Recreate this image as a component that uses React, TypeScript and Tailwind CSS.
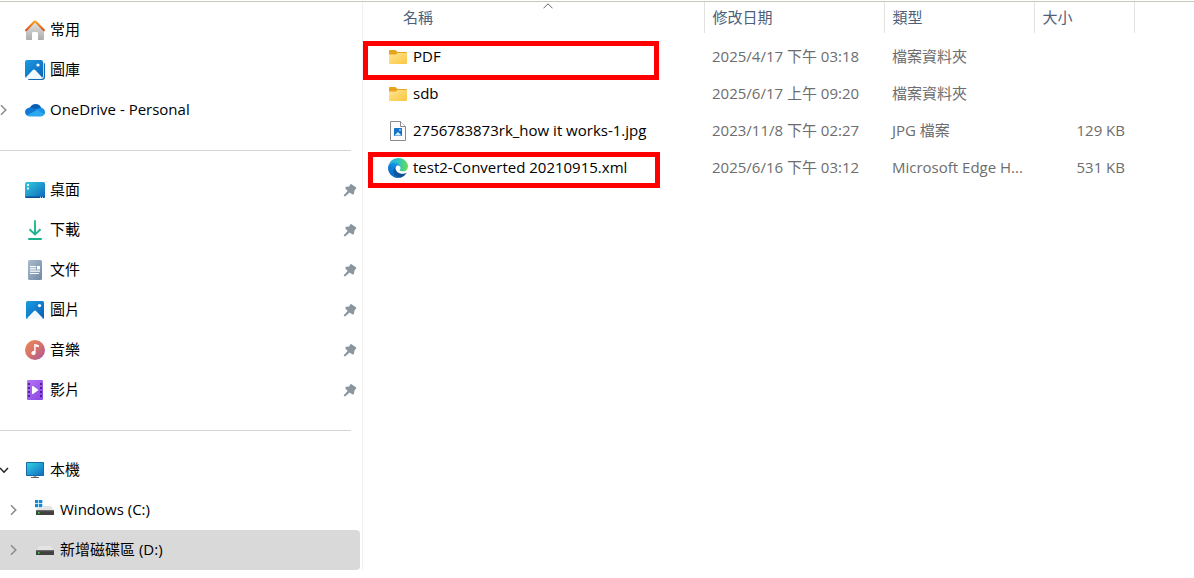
import React from 'react';

const HomeIcon = () => (
  <svg width="20" height="20" viewBox="0 0 20 20" fill="none">
    <defs>
      <linearGradient id="homeBody" x1="0" y1="0" x2="0" y2="1">
        <stop offset="0%" stopColor="#e4e4e4" />
        <stop offset="100%" stopColor="#adadad" />
      </linearGradient>
      <linearGradient id="homeRoof" x1="0" y1="0" x2="0" y2="1">
        <stop offset="0%" stopColor="#f9a11b" />
        <stop offset="100%" stopColor="#d9501c" />
      </linearGradient>
    </defs>
    <path d="M1 10L10 1.5L19 10V19Q19 20 18 20H13V13.2Q13 12 11.8 12H8.2Q7 12 7 13.2V20H2Q1 20 1 19Z" fill="url(#homeBody)" />
    <path d="M1.1 10.3L9.3 1.8Q10 1.1 10.7 1.8L18.9 10.3" stroke="url(#homeRoof)" strokeWidth="2" strokeLinecap="round" />
  </svg>
);

const GalleryIcon = () => (
  <svg width="20" height="20" viewBox="0 0 20 20" fill="none">
    <defs>
      <linearGradient id="gallery" x1="0" y1="0" x2="1" y2="1">
        <stop offset="0%" stopColor="#1b9de2" />
        <stop offset="100%" stopColor="#0a62b8" />
      </linearGradient>
    </defs>
    <path d="M18.2 2.2Q20 2.6 20 4.5V17Q20 20 17 20H5Q3 20 2.6 18.8H16Q18.2 18.8 18.2 16.5Z" fill="#0f6ab8" />
    <rect width="18" height="18" rx="2" fill="url(#gallery)" />
    <path d="M1 17.3L7.8 10Q9 8.9 10.2 10L17 17.3Q16.6 18 16 18H2Q1.3 18 1 17.3Z" fill="#f3f9fe" />
    <circle cx="13" cy="5" r="1.6" fill="#fff" />
    <path d="M18.5 1.5V16.5Q18.5 18.5 16.5 18.5H2" stroke="#fff" strokeWidth="0.7" />
  </svg>
);

const OneDriveIcon = () => (
  <svg width="20" height="14" viewBox="0 0 20 14">
    <path d="M5 4.6A6.2 6.2 0 0 1 16.3 4.9L11 9L4 8Z" fill="#0a5fb4" />
    <path d="M5 4.4Q8.2 4.2 10.6 6.3L13 8L3 13Q0 11.8 0 8.8Q0.2 5 5 4.4Z" fill="#0f78d4" />
    <path d="M10.3 6.2L16.2 4.8Q19.8 5.6 20 9.2Q20 11 19 12L11 8.5Z" fill="#1a93e6" />
    <path d="M2 12.3L11.3 7.2Q12.3 6.8 13.2 7.3L19.2 11.6Q18 13.5 16 13.5H4.8Q3.2 13.5 2 12.3Z" fill="#2aa7ee" />
  </svg>
);

const DesktopIcon = () => (
  <svg width="20" height="16" viewBox="0 0 20 16">
    <defs>
      <linearGradient id="desktop" x1="0" y1="0" x2="1" y2="1">
        <stop offset="0%" stopColor="#33cbe0" />
        <stop offset="100%" stopColor="#0c66b9" />
      </linearGradient>
    </defs>
    <rect width="20" height="16" rx="1.5" fill="url(#desktop)" />
    <path d="M0 14.6H20Q19.8 16 18.5 16H1.5Q0.2 16 0 14.6Z" fill="#0b4f92" />
    <path d="M2 2H4V4H2ZM2 5.5H4V7.5H2ZM15 14.8H16V15.8H15ZM17 14.8H18V15.8H17Z" fill="#e9fbff" />
  </svg>
);

const DownloadIcon = () => (
  <svg width="14" height="20" viewBox="0 0 14 20" fill="none">
    <defs>
      <linearGradient id="download" x1="0" y1="0" x2="0" y2="20" gradientUnits="userSpaceOnUse">
        <stop offset="0%" stopColor="#35c48b" />
        <stop offset="100%" stopColor="#10a894" />
      </linearGradient>
    </defs>
    <path d="M6 0.8Q6 0 7 0T8 0.8V12.2L11.8 8.6L13.2 10L7 15.8L0.8 10L2.2 8.6L6 12.2Z" fill="url(#download)" />
    <rect y="18" width="14" height="2" rx="1" fill="#19b08c" />
  </svg>
);

const DocumentIcon = () => (
  <svg width="14" height="20" viewBox="0 0 14 20">
    <defs>
      <linearGradient id="document" x1="0" y1="0" x2="1" y2="1">
        <stop offset="0%" stopColor="#a9bccf" />
        <stop offset="100%" stopColor="#7288a5" />
      </linearGradient>
    </defs>
    <rect width="14" height="20" rx="1.5" fill="url(#document)" />
    <path d="M2 6H8V7.2H2ZM2 8.3H8V9.5H2ZM9 6H12V9.5H9ZM2 10.6H12V11.8H2ZM2 12.9H11V14.1H2Z" fill="#fff" />
  </svg>
);

const PicturesIcon = () => (
  <svg width="18" height="18" viewBox="0 0 18 18">
    <defs>
      <linearGradient id="pictures" x1="0" y1="0" x2="1" y2="1">
        <stop offset="0%" stopColor="#1b9ee3" />
        <stop offset="100%" stopColor="#0b5cb2" />
      </linearGradient>
    </defs>
    <rect width="18" height="18" rx="1.5" fill="url(#pictures)" />
    <path d="M1 17.2L8 10Q9 9.1 10 10L17 17.2Q16.6 18 16 18H2Q1.3 18 1 17.2Z" fill="#f3f9fe" />
    <circle cx="13.5" cy="4.6" r="1.6" fill="#fff" />
  </svg>
);

const MusicIcon = () => (
  <svg width="20" height="20" viewBox="0 0 20 20">
    <defs>
      <linearGradient id="music" x1="0" y1="0" x2="1" y2="1">
        <stop offset="0%" stopColor="#ec8a55" />
        <stop offset="50%" stopColor="#d6726a" />
        <stop offset="100%" stopColor="#a8549f" />
      </linearGradient>
    </defs>
    <circle cx="10" cy="10" r="10" fill="url(#music)" />
    <path d="M9.2 4.4Q9.2 3.8 9.9 4L13.4 5Q13.9 5.2 13.9 5.7V7.2L10.6 6.5V13A2.1 2 0 1 1 9.2 11.1Z" fill="#fff" />
  </svg>
);

const VideoIcon = () => (
  <svg width="16" height="20" viewBox="0 0 16 20">
    <defs>
      <linearGradient id="video" x1="0" y1="0" x2="1" y2="1">
        <stop offset="0%" stopColor="#b673f5" />
        <stop offset="100%" stopColor="#8746e2" />
      </linearGradient>
    </defs>
    <rect width="16" height="20" rx="1.2" fill="url(#video)" />
    <path
      d="M1 3H3V5H1ZM1 7H3V9H1ZM1 11H3V13H1ZM1 15H3V17H1ZM13 3H15V5H13ZM13 7H15V9H13ZM13 11H15V13H13ZM13 15H15V17H13Z"
      fill="#4e2391"
    />
    <path d="M5 6.6Q5 5.6 6 6.1L10.9 9.4Q11.6 10 10.9 10.6L6 13.9Q5 14.4 5 13.4Z" fill="#fff" />
  </svg>
);

const ComputerIcon = () => (
  <svg width="18" height="16" viewBox="0 0 18 16">
    <defs>
      <linearGradient id="computer" x1="0" y1="0" x2="1" y2="1">
        <stop offset="0%" stopColor="#34cfe0" />
        <stop offset="100%" stopColor="#0d6fc4" />
      </linearGradient>
    </defs>
    <rect width="18" height="14" rx="0.8" fill="#1769a5" />
    <rect x="1" y="1" width="16" height="12" fill="url(#computer)" />
    <path d="M7.5 14H10.5V15H7.5Z" fill="#98a3ac" />
    <path d="M5 15H13V16H5Z" fill="#5d6871" />
  </svg>
);

const DriveIcon = ({ system = false }: { system?: boolean }) => (
  <svg width="20" height="20" viewBox="0 0 20 20">
    <path d="M4 6H16L19 10.5H1Z" fill="#e4e4e4" />
    <rect x="1" y="10" width="18" height="5" rx="0.6" fill="#414141" />
    <path d="M1 10.600Q1 10 1.600 10H18.400Q19 10 19 10.600V11.200H1Z" fill="#6b6b6b" />
    <rect x="3" y="12" width="1.600" height="1.600" fill="#36d83c" />
    {system && (
      <>
        <path d="M0 0H8V8H0Z" fill="#fff" />
        <path d="M0 0H3.3V3.3H0ZM4 0H7.3V3.3H4ZM0 4H3.3V7.3H0ZM4 4H7.3V7.3H4Z" fill="#118bd8" />
      </>
    )}
  </svg>
);

const FolderIcon = () => (
  <svg width="18" height="14" viewBox="0 0 18 14">
    <defs>
      <linearGradient id="folder" x1="0" y1="0" x2="1" y2="1">
        <stop offset="0%" stopColor="#ffe594" />
        <stop offset="100%" stopColor="#fbc63f" />
      </linearGradient>
    </defs>
    <path d="M0 1Q0 0 1 0H6Q6.6 0 7 0.5L8.5 2H17Q18 2 18 3V8H0Z" fill="#e8a31c" />
    <path d="M0 4.5H6.4Q7 4.5 7.4 4L8.2 3.2Q8.5 3 9 3H17Q18 3 18 4V13Q18 14 17 14H1Q0 14 0 13Z" fill="url(#folder)" />
  </svg>
);

const JpgIcon = () => (
  <svg width="16" height="20" viewBox="0 0 16 20">
    <path d="M0.5 0.5H10.5L15.5 5.5V19.5H0.5Z" fill="#fbfbfb" stroke="#8b8b8b" />
    <path d="M10.5 0.5V5.5H15.5" fill="#fff" stroke="#8b8b8b" />
    <rect x="4" y="7" width="8" height="8" rx="0.6" fill="#1272cc" />
    <path d="M4.5 14.6L8 11L11.5 14.6Z" fill="#d9effc" />
    <circle cx="10" cy="9" r="0.8" fill="#fff" />
  </svg>
);

const EdgeIcon = () => (
  <svg width="20" height="20" viewBox="0 0 256 256">
    <defs>
      <linearGradient id="edgeDark" x1="60" y1="170" x2="240" y2="170" gradientUnits="userSpaceOnUse">
        <stop offset="0%" stopColor="#0c59a4" />
        <stop offset="100%" stopColor="#114a8b" />
      </linearGradient>
      <linearGradient id="edgeBlue" x1="150" y1="100" x2="40" y2="235" gradientUnits="userSpaceOnUse">
        <stop offset="0%" stopColor="#1b9de2" />
        <stop offset="65%" stopColor="#0a78d3" />
        <stop offset="100%" stopColor="#0669bf" />
      </linearGradient>
      <linearGradient id="edgeGreen" x1="10" y1="80" x2="250" y2="90" gradientUnits="userSpaceOnUse">
        <stop offset="0%" stopColor="#2aa9e6" />
        <stop offset="50%" stopColor="#2fc2c4" />
        <stop offset="100%" stopColor="#66dd50" />
      </linearGradient>
    </defs>
    <path
      d="M231 190.500a93.700 93.700 0 0 1-10.500 4.700 101.900 101.900 0 0 1-35.900 6.500c-47.300 0-88.500-32.500-88.500-74.300a31.500 31.500 0 0 1 16.400-27.300c-42.800 1.800-53.800 46.400-53.800 72.500 0 73.900 68.100 81.400 82.800 81.400 7.900 0 19.800-2.300 27-4.600l1.300-.4a128.300 128.300 0 0 0 66.600-52.800 4 4 0 0 0-5.400-5.700Z"
      fill="url(#edgeDark)"
    />
    <path
      d="M105.700 241.400a79.200 79.200 0 0 1-22.700-21.300 80.700 80.700 0 0 1 29.500-120c3.200-1.500 8.500-4.100 15.600-4a32.400 32.400 0 0 1 25.700 13 31.900 31.900 0 0 1 6.300 18.700c0-.2 24.500-79.600-80-79.600-43.900 0-80 41.700-80 78.200a130.200 130.200 0 0 0 12.100 56 128 128 0 0 0 156.400 67 75.500 75.500 0 0 1-62.800-8Z"
      fill="url(#edgeBlue)"
    />
    <path
      d="M152.300 148.900c-.9 1-3.400 2.500-3.400 5.600 0 2.600 1.700 5.200 4.800 7.300 14.300 10 41.400 8.600 41.500 8.600a59.600 59.600 0 0 0 30.300-8.300 61.400 61.400 0 0 0 30.400-52.900c.3-22.400-8-37.300-11.300-43.900C223.500 23.900 177.700 0 128 0A128 128 0 0 0 0 126.200c.5-36.500 36.800-66 80-66 3.500 0 23.500.3 42 10 16.300 8.600 24.900 19 30.900 29.200 6.200 10.700 7.300 24.100 7.300 29.500 0 5.300-2.700 13.300-7.900 20Z"
      fill="url(#edgeGreen)"
    />
  </svg>
);

const PinIcon = () => (
  <svg width="14" height="14" viewBox="0 0 14 14">
    <path
      d="M7.200 1.500Q7.600 0.700 8.500 1.200L12.900 4.300Q13.700 5.200 12.900 5.900L11.500 7.300L11 10.600Q10.400 12.200 9.200 11.300L6.600 9.400L2.400 13.200H0.900V12L4.700 8L2.400 5.400Q2 4.200 3.200 3.800L6.200 3.500Z"
      fill="#8a969d"
    />
  </svg>
);

const ChevronRight = () => (
  <svg width="7" height="12" viewBox="0 0 7 12" fill="none" stroke="#8a8a8a" strokeWidth="1.5">
    <path d="M1 1.200L5.800 6L1 10.800" />
  </svg>
);

const ChevronDown = () => (
  <svg width="10" height="7" viewBox="0 0 10 7" fill="none" stroke="#222" strokeWidth="1.500">
    <path d="M1 1L5 5.200L9 1" />
  </svg>
);

interface NavRowProps {
  icon: React.ReactNode;
  label: string;
  arrow?: 'right' | 'down';
  pinned?: boolean;
  nested?: boolean;
  selected?: boolean;
}

const NavRow: React.FC<NavRowProps> = ({ icon, label, arrow, pinned, nested, selected }) => (
  <li className={`flex h-10 items-center rounded-r-sm ${nested ? 'pl-2.5' : ''} ${selected ? 'bg-[#d9d9d9]' : ''}`}>
    <span className="flex w-[25px] shrink-0">
      {arrow && (
        <button
          type="button"
          aria-label={label}
          aria-expanded={arrow === 'down'}
          className={arrow === 'down' ? '-ml-px' : ''}
        >
          {arrow === 'down' ? <ChevronDown /> : <ChevronRight />}
        </button>
      )}
    </span>
    <a href="#" className="flex flex-1 items-center gap-[5px] text-black">
      <span className="flex w-5 justify-center">{icon}</span>
      <span className="pb-0.5">{label}</span>
    </a>
    {pinned && (
      <span className="mr-[3px]">
        <PinIcon />
      </span>
    )}
  </li>
);

const Divider = () => (
  <li className="flex h-10 items-center pr-[9px]">
    <hr className="w-full border-[#d4d4d4]" />
  </li>
);

const Sidebar = () => (
  <nav className="w-[363px] shrink-0 border-r border-[#f0f0f0] pt-2 pr-[2px]">
    <ul>
      <NavRow icon={<HomeIcon />} label="常用" />
      <NavRow icon={<GalleryIcon />} label="圖庫" />
      <NavRow icon={<OneDriveIcon />} label="OneDrive - Personal" arrow="right" />
      <Divider />
      <NavRow icon={<DesktopIcon />} label="桌面" pinned />
      <NavRow icon={<DownloadIcon />} label="下載" pinned />
      <NavRow icon={<DocumentIcon />} label="文件" pinned />
      <NavRow icon={<PicturesIcon />} label="圖片" pinned />
      <NavRow icon={<MusicIcon />} label="音樂" pinned />
      <NavRow icon={<VideoIcon />} label="影片" pinned />
      <Divider />
      <NavRow icon={<ComputerIcon />} label="本機" arrow="down" />
      <NavRow icon={<DriveIcon system />} label="Windows (C:)" arrow="right" nested />
      <NavRow icon={<DriveIcon />} label="新增磁碟區 (D:)" arrow="right" nested selected />
    </ul>
  </nav>
);

const files = [
  {
    name: 'PDF',
    icon: <FolderIcon />,
    date: '2025/4/17 下午 03:18',
    type: '檔案資料夾',
    size: '',
    mark: 'left-0 w-[296px] h-[39px]',
  },
  { name: 'sdb', icon: <FolderIcon />, date: '2025/6/17 上午 09:20', type: '檔案資料夾', size: '', mark: '' },
  {
    name: '2756783873rk_how it works-1.jpg',
    icon: <JpgIcon />,
    date: '2023/11/8 下午 02:27',
    type: 'JPG 檔案',
    size: '129 KB',
    mark: '',
  },
  {
    name: 'test2-Converted 20210915.xml',
    icon: <EdgeIcon />,
    date: '2025/6/16 下午 03:12',
    type: 'Microsoft Edge H...',
    size: '531 KB',
    mark: 'left-[5px] w-[292px] h-9',
  },
];

const FileTable = () => (
  <table className="w-full table-fixed border-collapse text-left">
    <colgroup>
      <col className="w-[341px]" />
      <col className="w-[180px]" />
      <col className="w-[150px]" />
      <col className="w-[100px]" />
      <col />
    </colgroup>
    <thead className="text-[#4c607a]">
      <tr className="h-[31px]">
        <th className="p-0 pb-0.5 font-normal">
          <div className="relative ml-[30px] pl-2.5">
            名稱
            <svg
              className="absolute -top-1 left-1/2 -translate-x-1/2"
              width="10"
              height="6"
              viewBox="0 0 10 6"
              fill="none"
              stroke="#666"
            >
              <path d="M0.500 5.300L5 0.800L9.500 5.300" />
            </svg>
          </div>
        </th>
        <th className="border-l border-[#e2e2e2] p-0 pb-0.5 pl-2 font-normal">修改日期</th>
        <th className="border-l border-[#e2e2e2] p-0 pb-0.5 pl-2 font-normal">類型</th>
        <th className="border-l border-[#e2e2e2] p-0 pb-0.5 pl-2 font-normal">大小</th>
        <td className="border-l border-[#e2e2e2] p-0" />
      </tr>
    </thead>
    <tbody className="text-[#6d6d6d]">
      <tr className="h-[5px]">
        <td className="p-0" colSpan={5} />
      </tr>
      {files.map((file) => (
        <tr key={file.name} className="h-[37px]">
          <td className="relative p-0 pl-[25px]">
            <a href="#" className="flex items-center gap-[5px] whitespace-nowrap text-black">
              <span className="flex w-5 justify-center">{file.icon}</span>
              <span className="pb-0.5">{file.name}</span>
            </a>
            {file.mark && (
              <span className={`pointer-events-none absolute top-[3px] border-5 border-[#fe0000] ${file.mark}`} />
            )}
          </td>
          <td className="p-0 pb-0.5 pl-2 whitespace-nowrap">{file.date}</td>
          <td className="p-0 pb-0.5 pl-2 whitespace-nowrap">{file.type}</td>
          <td className="p-0 pr-[9px] pb-0.5 text-right whitespace-nowrap">{file.size}</td>
          <td className="p-0" />
        </tr>
      ))}
    </tbody>
  </table>
);

export default function App() {
  return (
    <div className="min-h-screen bg-white pt-px font-['Open_Sans','Noto_Sans_CJK_TC',sans-serif] text-[15px] leading-5">
      <div className="flex border-t border-[#c6c8bc]">
        <Sidebar />
        <main className="min-w-0 flex-1">
          <FileTable />
        </main>
      </div>
    </div>
  );
}
